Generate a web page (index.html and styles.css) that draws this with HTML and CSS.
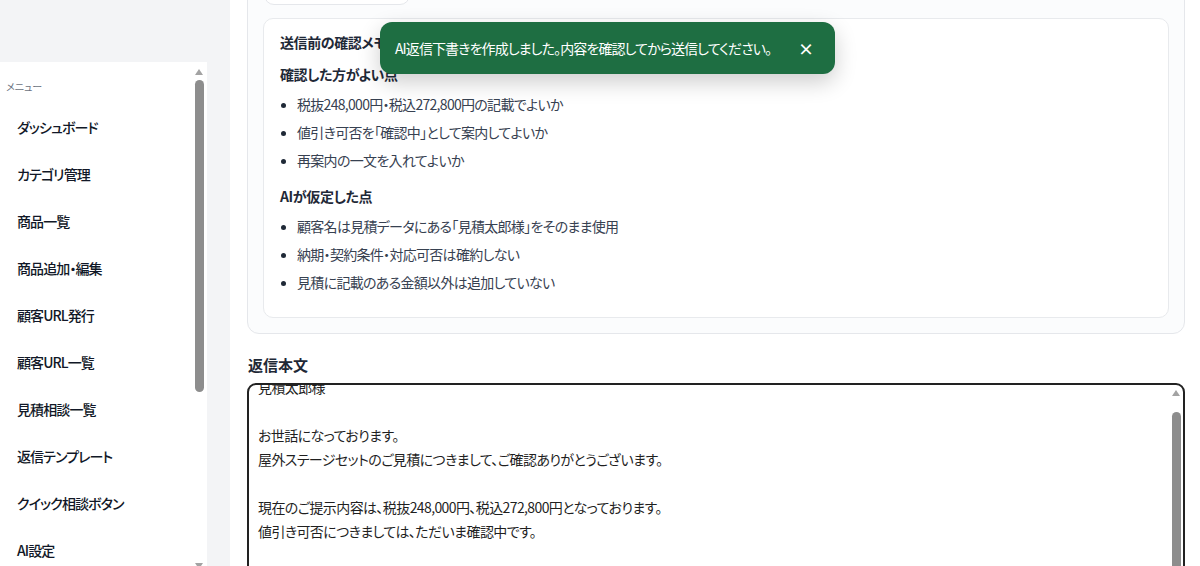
FILE: index.html
```html
<!DOCTYPE html>
<html lang="ja">
<head>
  <meta charset="UTF-8">
  <title>見積相談 返信作成</title>
  <meta name="viewport" content="width=device-width, initial-scale=1">
  <link rel="stylesheet" href="styles.css">
</head>
<body>
  <aside class="sidebar">
    <div class="sidebar-head"></div>
    <nav class="menu-panel">
      <div class="menu-label">メニュー</div>
      <a class="menu-item" href="#">ダッシュボード</a>
      <a class="menu-item" href="#">カテゴリ管理</a>
      <a class="menu-item" href="#">商品一覧</a>
      <a class="menu-item" href="#">商品追加・編集</a>
      <a class="menu-item" href="#">顧客URL発行</a>
      <a class="menu-item" href="#">顧客URL一覧</a>
      <a class="menu-item" href="#">見積相談一覧</a>
      <a class="menu-item" href="#">返信テンプレート</a>
      <a class="menu-item" href="#">クイック相談ボタン</a>
      <a class="menu-item" href="#">AI設定</a>

      <!-- scrollbar of the menu panel -->
      <div class="scrollbar menu-scroll">
        <span class="arrow up"></span>
        <span class="thumb"></span>
        <span class="arrow down"></span>
      </div>
    </nav>
  </aside>

  <main class="main">
    <div class="main-inner">
      <section class="ai-section">
        <button class="ghost-btn" type="button">AI返信下書きを作成</button>

        <div class="memo-card">
          <h3 class="memo-title">送信前の確認メモ</h3>

          <h4 class="memo-heading">確認した方がよい点</h4>
          <ul class="memo-list">
            <li>税抜248,000円・税込272,800円の記載でよいか</li>
            <li>値引き可否を「確認中」として案内してよいか</li>
            <li>再案内の一文を入れてよいか</li>
          </ul>

          <h4 class="memo-heading second">AIが仮定した点</h4>
          <ul class="memo-list">
            <li>顧客名は見積データにある「見積太郎様」をそのまま使用</li>
            <li>納期・契約条件・対応可否は確約しない</li>
            <li>見積に記載のある金額以外は追加していない</li>
          </ul>
        </div>
      </section>

      <label class="field-label" for="reply-body">返信本文</label>
      <div class="reply-box" id="reply-body">
        <div class="reply-text">見積太郎様

お世話になっております。
屋外ステージセットのご見積につきまして、ご確認ありがとうございます。

現在のご提示内容は、税抜248,000円、税込272,800円となっております。
値引き可否につきましては、ただいま確認中です。

</div>
        <div class="scrollbar reply-scroll">
          <span class="arrow up"></span>
          <span class="thumb"></span>
        </div>
      </div>
    </div>
  </main>

  <div class="toast">
    <span class="toast-text">AI返信下書きを作成しました。内容を確認してから送信してください。</span>
    <button class="toast-close" type="button">×</button>
  </div>
</body>
</html>
```

FILE: styles.css
```css
* {
  box-sizing: border-box;
}

html, body {
  height: 100%;
}

body {
  margin: 0;
  display: flex;
  overflow: hidden;
  background: #f3f4f6;
  font-family: "Noto Sans CJK JP", "Noto Sans", sans-serif;
  font-feature-settings: "palt";
  color: #1f2937;
}

/* sidebar */
.sidebar {
  width: 207px;
  flex-shrink: 0;
  display: flex;
  flex-direction: column;
  margin-right: 23px;
}

.sidebar-head {
  height: 62px;
  flex-shrink: 0;
}

.menu-panel {
  position: relative;
  flex: 1;
  background: #fff;
  padding: 18px 0 0 6px;
  overflow: hidden;
}

.menu-label {
  font-size: 10px;
  line-height: 14px;
  color: #6b7280;
  margin-bottom: 10px;
}

.menu-item {
  display: block;
  padding: 13px 11px;
  font-size: 14px;
  line-height: 21px;
  font-weight: 500;
  letter-spacing: -0.9px;
  color: #111827;
  text-decoration: none;
}

/* scrollbars */
.scrollbar {
  position: absolute;
  width: 9px;
}

.scrollbar .thumb {
  position: absolute;
  left: 0;
  width: 9px;
  background: #8d8d8d;
  border-radius: 5px;
}

.scrollbar .arrow {
  position: absolute;
  left: 0;
  width: 0;
  height: 0;
  border-left: 4.5px solid transparent;
  border-right: 4.5px solid transparent;
}

.scrollbar .arrow.up {
  border-bottom: 6px solid #a3a3a3;
}

.scrollbar .arrow.down {
  border-top: 6px solid #a3a3a3;
}

.menu-scroll {
  top: 4px;
  right: 3px;
  bottom: 0;
}

.menu-scroll .arrow.up {
  top: 3px;
}

.menu-scroll .thumb {
  top: 14px;
  height: 312px;
}

.menu-scroll .arrow.down {
  bottom: -3px;
}

/* main column */
.main {
  flex: 1;
  background: #fff;
  padding: 0 15px 0 17px;
  overflow: hidden;
}

.main-inner {
  margin-top: -47px;
}

.ai-section {
  border: 1px solid #e5e7eb;
  border-radius: 12px;
  background: #fbfcfd;
  padding: 15px;
}

.ghost-btn {
  display: block;
  width: 146px;
  height: 36px;
  margin: 0 0 13px 1px;
  border: 1px solid #e5e7eb;
  border-radius: 10px;
  background: #fff;
  font: inherit;
  font-size: 13px;
  color: #374151;
}

.memo-card {
  background: #fff;
  border: 1px solid #e8eaed;
  border-radius: 10px;
  padding: 13px 16px 21px;
}

.memo-title,
.memo-heading {
  margin: 0;
  font-size: 14px;
  line-height: 20px;
  font-weight: 600;
  letter-spacing: -0.4px;
  color: #1f2937;
}

.memo-title {
  margin-bottom: 12px;
}

.memo-heading.second {
  margin-top: 12px;
}

.memo-list {
  margin: 6px 0 0;
  padding-left: 17px;
}

.memo-list li {
  font-size: 14px;
  line-height: 28px;
  letter-spacing: -0.7px;
  color: #374151;
}

.memo-list li::marker {
  color: #1f2937;
  font-size: 12px;
}

/* reply body */
.field-label {
  display: block;
  margin: 21px 0 8px 1px;
  font-size: 15px;
  line-height: 20px;
  font-weight: 700;
  color: #1f2937;
}

.reply-box {
  position: relative;
  height: 260px;
  border: 2px solid #222;
  border-radius: 9px;
  padding: 0 20px 0 9px;
  overflow: hidden;
  background: #fff;
}

.reply-text {
  margin-top: -10px;
  white-space: pre-wrap;
  font-size: 14px;
  line-height: 24px;
  letter-spacing: -0.6px;
  color: #1f1f1f;
}

.reply-scroll {
  top: 0;
  right: 2px;
  bottom: 0;
}

.reply-scroll .arrow.up {
  top: 5px;
}

.reply-scroll .thumb {
  top: 27px;
  bottom: -10px;
}

/* toast */
.toast {
  position: absolute;
  top: 22px;
  left: 380px;
  width: 455px;
  height: 52px;
  display: flex;
  align-items: center;
  justify-content: space-between;
  padding: 0 21px 0 15px;
  background: #1e6e42;
  color: #fff;
  border-radius: 12px;
  box-shadow: 0 8px 22px rgba(0, 0, 0, 0.2);
  font-size: 14px;
}

.toast-text {
  white-space: nowrap;
  letter-spacing: -0.9px;
}

.toast-close {
  border: none;
  background: none;
  color: #fff;
  font: inherit;
  font-size: 16px;
  font-weight: 700;
  padding: 0;
  cursor: pointer;
}
```
